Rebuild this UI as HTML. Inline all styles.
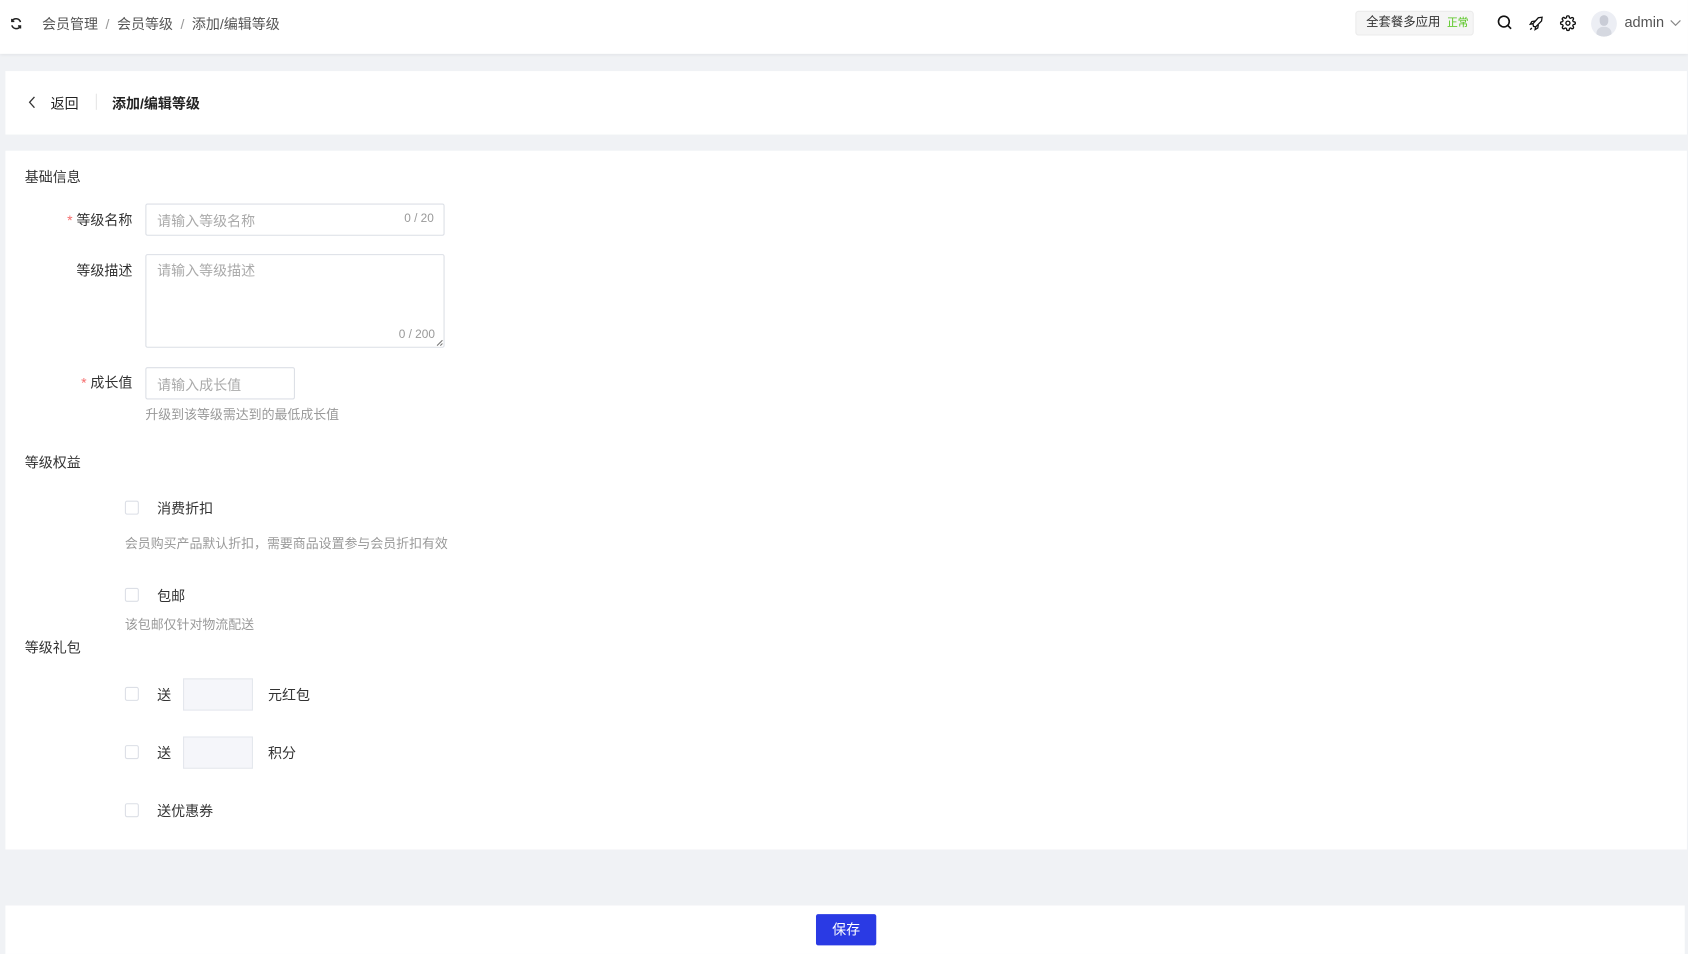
<!DOCTYPE html>
<html><head><meta charset="utf-8">
<style>
html,body{margin:0;padding:0;width:1688px;height:954px;overflow:hidden;background:#f0f2f5;}
#w{position:absolute;left:0;top:0;width:1568px;height:886px;transform:scale(1.0765,1.0767);transform-origin:0 0;font-family:"Liberation Sans","Noto Sans CJK SC",sans-serif;color:#333;font-size:13px;}
.a{position:absolute;white-space:nowrap;}
.top{position:absolute;left:0;top:0;width:1568px;height:50px;background:#fff;box-shadow:0 1px 3px rgba(0,0,0,.06);}
.panel{position:absolute;background:#fff;}
.inp{position:absolute;border:1px solid #dcdfe6;border-radius:2px;background:#fff;box-sizing:border-box;}
.ph{color:#aaa;}
.cb{position:absolute;left:116px;width:13px;height:13px;border:1px solid #dcdfe6;border-radius:2px;box-sizing:border-box;background:#fff;}
.hint{color:#999;font-size:12px;}
.star{color:#f56c6c;}
.sbox{position:absolute;left:170px;width:65px;height:30px;background:#f5f6fa;border:1px solid #e4e7ed;box-sizing:border-box;}
.sep{color:#999;margin:0 7px;}
</style></head><body><div id="w">
<div class="top">
 <svg class="a" style="left:9px;top:16px" width="12" height="12" viewBox="0 0 12 12" fill="none" stroke="#222" stroke-width="1.4"><path d="M10 4.5A4.3 4.3 0 0 0 2.2 3.5M2 7.5A4.3 4.3 0 0 0 9.8 8.5"/><path d="M2 1.5v2.3h2.3M10 10.5V8.2H7.7"/></svg>
 <div class="a" style="left:39px;top:12px;color:#555;">会员管理<span class="sep">/</span>会员等级<span class="sep">/</span>添加/编辑等级</div>
 <div class="a" style="left:1259px;top:10px;width:110px;height:23px;background:#f5f5f5;border:1px solid #ebebeb;border-radius:3px;box-sizing:border-box;font-size:11.5px;line-height:21px;padding-left:9px;color:#333;">全套餐多应用 <span style="color:#52c41a;font-size:10px;margin-left:3px">正常</span></div>
 <svg class="a" style="left:1391px;top:14px" width="14" height="14" viewBox="0 0 14 14" fill="none" stroke="#111" stroke-width="1.5"><circle cx="6" cy="6" r="5"/><path d="M9.7 9.7l3 3"/></svg>
 <svg class="a" style="left:1420px;top:15px" width="14" height="14" viewBox="0 0 14 14" fill="none" stroke="#111" stroke-width="1.2"><path d="M4.5 9.5L4 7l5-5.5 3.5-.5-.5 3.5L6.5 10z"/><path d="M4 7L1.5 7.5l1.5-2.5 3-.5M6.5 10L6 12.5l2.5-1.5.5-3"/><path d="M3 11l-1.5 1.5"/></svg>
 <svg class="a" style="left:1449px;top:14px" width="15" height="15" viewBox="0 0 24 24" fill="none" stroke="#111" stroke-width="2"><circle cx="12" cy="12" r="3"/><path d="M19.4 15a1.65 1.65 0 0 0 .33 1.82l.06.06a2 2 0 1 1-2.830 2.83l-.06-.06a1.650 1.650 0 0 0-1.82-.33 1.65 1.65 0 0 0-1 1.51V21a2 2 0 1 1-4 0v-.09A1.65 1.65 0 0 0 9 19.4a1.65 1.65 0 0 0-1.820.33l-.06.06a2 2 0 1 1-2.83-2.83l.06-.06A1.65 1.65 0 0 0 4.6 15a1.65 1.65 0 0 0-1.51-1H3a2 2 0 1 1 0-4h.09A1.65 1.65 0 0 0 4.6 9a1.65 1.65 0 0 0-.33-1.82l-.06-.06a2 2 0 1 1 2.83-2.83l.06.06A1.65 1.65 0 0 0 9 4.6a1.65 1.65 0 0 0 1-1.51V3a2 2 0 1 1 4 0v.09a1.65 1.65 0 0 0 1 1.51 1.65 1.65 0 0 0 1.82-.33l.06-.06a2 2 0 1 1 2.83 2.83l-.06.06A1.65 1.65 0 0 0 19.4 9a1.65 1.65 0 0 0 1.51 1H21a2 2 0 1 1 0 4h-.09a1.65 1.65 0 0 0-1.51 1z"/></svg>
 <div class="a" style="left:1478px;top:10px;width:24px;height:24px;border-radius:50%;background:#eceef4;overflow:hidden;"><div class="a" style="left:8px;top:4px;width:8px;height:10px;border-radius:4px;background:#c9ccd6"></div><div class="a" style="left:5px;top:15px;width:14px;height:12px;border-radius:6px;background:#d5d8e0"></div></div>
 <div class="a" style="left:1509px;top:13px;color:#555;font-size:13.5px;">admin</div>
 <svg class="a" style="left:1551px;top:18px" width="11" height="7" viewBox="0 0 11 7" fill="none" stroke="#888" stroke-width="1.1"><path d="M1 1l4.5 4.5L10 1"/></svg>
</div>

<div class="panel" style="left:5px;top:66px;width:1562px;height:59px;">
 <svg class="a" style="left:21px;top:23px" width="8" height="12" viewBox="0 0 8 12" fill="none" stroke="#333" stroke-width="1.2"><path d="M6 1L1.5 6 6 11"/></svg>
 <div class="a" style="left:42px;top:20px;color:#222;">返回</div>
 <div class="a" style="left:84px;top:21px;width:1px;height:15px;background:#e5e5e5;"></div>
 <div class="a" style="left:99px;top:20px;color:#222;font-weight:bold;">添加/编辑等级</div>
</div>

<div class="panel" style="left:5px;top:140px;width:1562px;height:649px;"></div>
<div class="a" style="left:23px;top:154px;">基础信息</div>
<div class="a" style="left:0;top:194px;width:123px;text-align:right;"><span class="star">*</span> 等级名称</div>
<div class="inp" style="left:135px;top:189px;width:278px;height:30px;"><span class="a ph" style="left:10px;top:5px;">请输入等级名称</span><span class="a" style="right:9px;top:7px;color:#999;font-size:11px;">0 / 20</span></div>
<div class="a" style="left:0;top:241px;width:123px;text-align:right;">等级描述</div>
<div class="inp" style="left:135px;top:236px;width:278px;height:87px;"><span class="a ph" style="left:10px;top:4px;">请输入等级描述</span><span class="a" style="right:8px;top:68px;color:#999;font-size:11px;">0 / 200</span>
 <svg class="a" style="right:0;bottom:0" width="7" height="7" viewBox="0 0 7 7" stroke="#777" stroke-width="1"><path d="M6 1L1 6M6 4L4 6"/></svg></div>
<div class="a" style="left:0;top:345px;width:123px;text-align:right;"><span class="star">*</span> 成长值</div>
<div class="inp" style="left:135px;top:341px;width:139px;height:30px;"><span class="a ph" style="left:10px;top:5px;">请输入成长值</span></div>
<div class="a hint" style="left:135px;top:376px;">升级到该等级需达到的最低成长值</div>

<div class="a" style="left:23px;top:419px;">等级权益</div>
<div class="cb" style="top:465px;"></div><div class="a" style="left:146px;top:462px;">消费折扣</div>
<div class="a hint" style="left:116px;top:496px;">会员购买产品默认折扣，需要商品设置参与会员折扣有效</div>
<div class="cb" style="top:546px;"></div><div class="a" style="left:146px;top:543px;">包邮</div>
<div class="a hint" style="left:116px;top:571px;">该包邮仅针对物流配送</div>

<div class="a" style="left:23px;top:591px;">等级礼包</div>
<div class="cb" style="top:638px;"></div><div class="a" style="left:146px;top:635px;">送</div><div class="sbox" style="top:630px;"></div><div class="a" style="left:249px;top:635px;">元红包</div>
<div class="cb" style="top:692px;"></div><div class="a" style="left:146px;top:689px;">送</div><div class="sbox" style="top:684px;"></div><div class="a" style="left:249px;top:689px;">积分</div>
<div class="cb" style="top:746px;"></div><div class="a" style="left:146px;top:743px;">送优惠券</div>

<div class="panel" style="left:5px;top:841px;width:1560px;height:45px;"></div>
<div class="a" style="left:758px;top:849px;width:56px;height:29px;background:#2a3ae4;border-radius:2px;color:#fff;text-align:center;line-height:29px;font-size:13px;">保存</div>
</div></body></html>
